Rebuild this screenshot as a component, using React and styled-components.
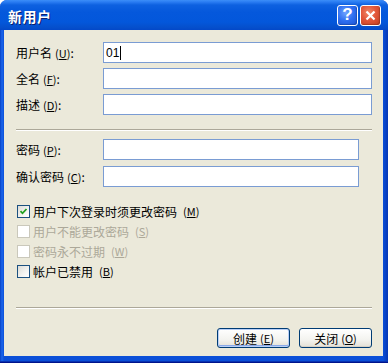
import React from 'react';
import styled, { createGlobalStyle } from 'styled-components';

const Global = createGlobalStyle`
  html, body { margin: 0; padding: 0; background: #fff; }
  body { font-family: "Noto Sans CJK SC", "Noto Sans", sans-serif; font-size: 12px; }
  * { box-sizing: border-box; }
`;

const Window = styled.div`
  width: 388px;
  height: 363px;
  display: flex;
  flex-direction: column;
  border-radius: 7px 7px 0 0;
  overflow: hidden;
  background: linear-gradient(90deg, #0841c4 0, #1b66ec 2px, #0a4fd8 4px, #0a4fd8 calc(100% - 5px), #0637b4 100%);
  box-shadow: inset 0 -1px 0 #00138c, inset 0 -2px 0 #0832b0;
`;

const TitleBar = styled.div`
  height: 30px;
  flex: 0 0 30px;
  display: flex;
  align-items: center;
  padding: 0 7px 0 8px;
  background: linear-gradient(180deg, #3c8ef8 0, #2a7cf2 2px, #0e61e0 5px, #0558dc 12px, #0357db 22px, #0550cd 27px, #0348c8 30px);
`;

const Title = styled.div`
  flex: 1;
  color: #fff;
  font-weight: 700;
  font-size: 14px;
  letter-spacing: 0.5px;
  text-shadow: 1px 1px 0 #0a1f6e;
  padding-top: 1px;
`;

const CapButton = styled.div`
  width: 21px;
  height: 21px;
  border: 1px solid #fff;
  border-radius: 3px;
  display: flex;
  align-items: center;
  justify-content: center;
  color: #fff;
  font-family: "Liberation Sans", Arial, sans-serif;
  font-weight: 700;
  font-size: 17px;
  margin-left: 2px;
  background: ${p => p.$red
    ? 'radial-gradient(circle at 40% 35%, #f08a6a 0, #e2573a 45%, #c23d1f 100%)'
    : 'radial-gradient(circle at 40% 35%, #6fa3ff 0, #2e6ef0 50%, #1a53d4 100%)'};
  box-shadow: inset -1px -1px 1px rgba(0,0,0,0.2);
`;

const Client = styled.div`
  flex: 1;
  margin: 0 5px 7px 4px;
  background: #ebe9da;
  padding: 12px 11px 0 12px;
  display: flex;
  flex-direction: column;
`;

const Grid = styled.div`
  display: grid;
  grid-template-columns: 87px ${p => p.$w}px;
  grid-auto-rows: 21px;
  row-gap: ${p => p.$gap}px;
  align-items: center;
  margin-top: ${p => p.$mt || 0}px;
`;

const Label = styled.label`
  color: #000;
  font-size: 12px;
  white-space: nowrap;
  line-height: 21px;
`;

const Mn = styled.span`
  margin-left: 3px;
  font-size: 11px;
  color: inherit;
  & u { text-decoration: underline; text-underline-offset: 1px; }
`;

const Input = styled.div`
  height: 21px;
  background: #fff;
  border: 1px solid #7a9cd3;
  padding-left: 2px;
  display: flex;
  align-items: center;
  font-family: "Liberation Sans", Arial, sans-serif;
  font-size: 12px;
  color: #000;
`;

const Caret = styled.span`
  display: inline-block;
  width: 1px;
  height: 14px;
  background: #000;
  margin-left: 1px;
`;

const Separator = styled.div`
  height: 2px;
  margin-top: ${p => p.$mt}px;
  border-top: 1px solid #aca899;
  border-bottom: 1px solid #fff;
`;

const Checks = styled.div`
  display: flex;
  flex-direction: column;
  margin-top: 14px;
  padding-left: 1px;
`;

const CheckRow = styled.div`
  height: 20px;
  display: flex;
  align-items: center;
  gap: 3px;
  color: ${p => (p.$disabled ? '#aca899' : '#000')};
  font-size: 12px;
  white-space: nowrap;
`;

const Box = styled.span`
  width: 13px;
  height: 13px;
  flex: 0 0 13px;
  display: flex;
  align-items: center;
  justify-content: center;
  border: 1px solid ${p => (p.$disabled ? '#cac8bb' : '#1c5180')};
  background: ${p => (p.$disabled ? '#fff' : 'linear-gradient(135deg, #dcdcd7 0%, #f4f4f1 60%, #ffffff 100%)')};
`;

const Buttons = styled.div`
  display: flex;
  justify-content: flex-end;
  gap: 9px;
  margin-top: 19px;
`;

const Button = styled.div`
  width: 73px;
  height: 20px;
  border: 1px solid #003c74;
  border-radius: 3px;
  display: flex;
  align-items: center;
  justify-content: center;
  font-size: 12px;
  color: #000;
  background: linear-gradient(180deg, #ffffff 0%, #f3f3ef 60%, #e3e0d6 100%);
  box-shadow: ${p => (p.$default ? 'inset 0 0 0 1px #b8cff7, inset 0 -1px 0 1px #8aa9e8' : 'inset 0 -1px 0 #d6d0c5')};
`;

const Check = () => (
  <svg width="9" height="9" viewBox="0 0 9 9">
    <path d="M1.5 4.2 L3.5 6.3 L7.5 2" stroke="#21a121" strokeWidth="1.8" fill="none" />
  </svg>
);

const M = ({ k }) => (
  <Mn>(<u>{k}</u>)</Mn>
);

export default function App() {
  return (
    <>
      <Global />
      <Window>
        <TitleBar>
          <Title>新用户</Title>
          <CapButton>?</CapButton>
          <CapButton $red>
            <svg width="11" height="11" viewBox="0 0 11 11">
              <path d="M1.5 1.5 L9.5 9.5 M9.5 1.5 L1.5 9.5" stroke="#fff" strokeWidth="2.2" />
            </svg>
          </CapButton>
        </TitleBar>
        <Client>
          <Grid $w={269} $gap={5}>
            <Label>用户名<M k="U" />:</Label>
            <Input>01<Caret /></Input>
            <Label>全名<M k="F" />:</Label>
            <Input />
            <Label>描述<M k="D" />:</Label>
            <Input />
          </Grid>
          <Separator $mt={14} />
          <Grid $w={256} $gap={6} $mt={8}>
            <Label>密码<M k="P" />:</Label>
            <Input />
            <Label>确认密码<M k="C" />:</Label>
            <Input />
          </Grid>
          <Checks>
            <CheckRow><Box><Check /></Box>用户下次登录时须更改密码<M k="M" /></CheckRow>
            <CheckRow $disabled><Box $disabled />用户不能更改密码<M k="S" /></CheckRow>
            <CheckRow $disabled><Box $disabled />密码永不过期<M k="W" /></CheckRow>
            <CheckRow><Box />帐户已禁用<M k="B" /></CheckRow>
          </Checks>
          <Separator $mt={26} />
          <Buttons>
            <Button $default>创建<M k="E" /></Button>
            <Button>关闭<M k="O" /></Button>
          </Buttons>
        </Client>
      </Window>
    </>
  );
}
